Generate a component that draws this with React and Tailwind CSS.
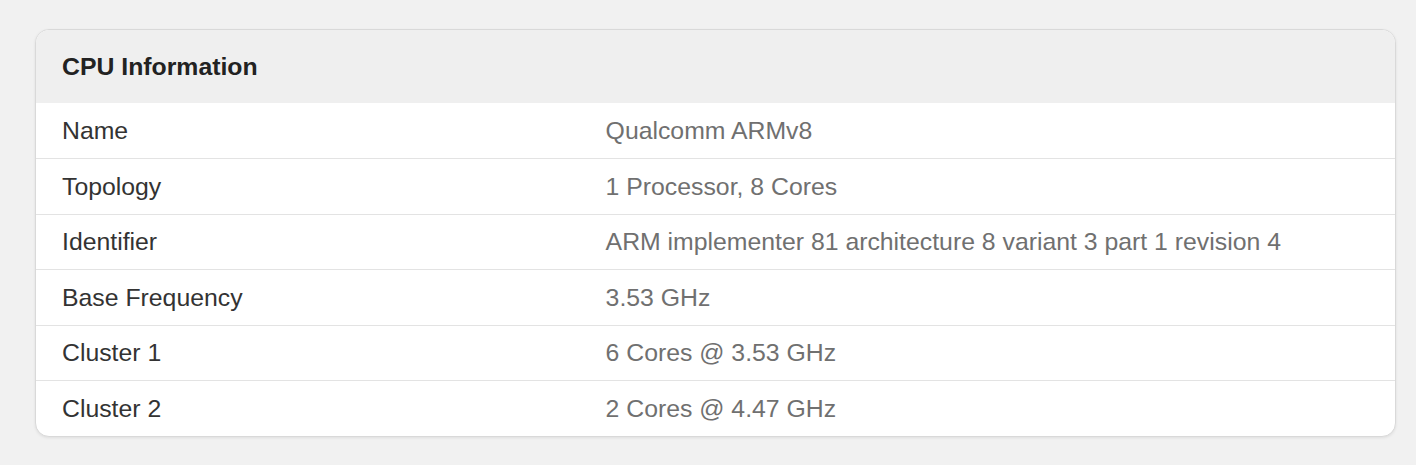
import React from "react";

const rows = [
  ["Name", "Qualcomm ARMv8"],
  ["Topology", "1 Processor, 8 Cores"],
  ["Identifier", "ARM implementer 81 architecture 8 variant 3 part 1 revision 4"],
  ["Base Frequency", "3.53 GHz"],
  ["Cluster 1", "6 Cores @ 3.53 GHz"],
  ["Cluster 2", "2 Cores @ 4.47 GHz"],
];

export default function App() {
  return (
    <div
      className="w-[1416px] h-[465px] bg-[#f1f1f1] pl-[35px] pt-[29px]"
      style={{ fontFamily: '"Liberation Sans", Arial, sans-serif' }}
    >
      <div className="w-[1361px] rounded-[14px] border border-[#d9d9d9] bg-white overflow-hidden shadow-[0_1px_3px_rgba(0,0,0,0.08)]">
        <div className="h-[73px] bg-[#efefef] flex items-center px-[26px]">
          <span className="text-[24.8px] font-bold text-[#222]">CPU Information</span>
        </div>
        {rows.map(([k, v], i) => (
          <div
            key={k}
            className={
              i === 0
                ? "grid grid-cols-[2fr_3fr] h-[55px] items-center"
                : "grid grid-cols-[2fr_3fr] h-[55.6px] items-center border-t border-[#e3e3e3]"
            }
          >
            <div className="px-[26px] text-[24.8px] text-[#333]">{k}</div>
            <div className="px-[26px] text-[24.8px] text-[#707070]">{v}</div>
          </div>
        ))}
      </div>
    </div>
  );
}
